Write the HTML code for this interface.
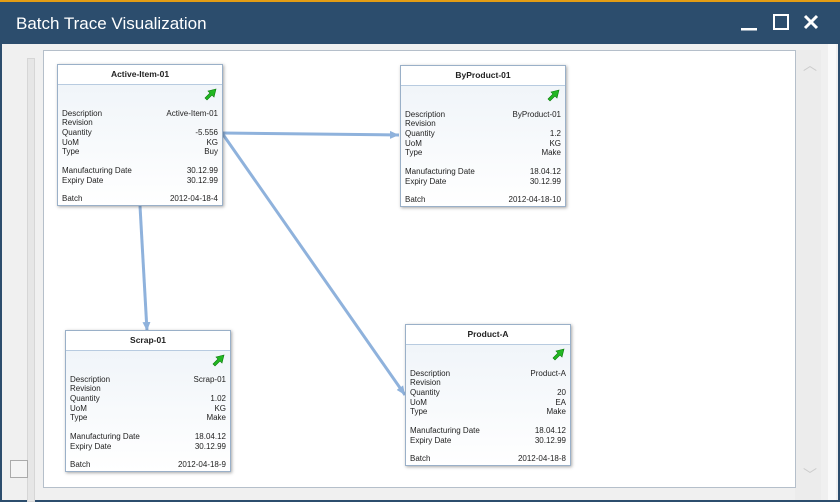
<!DOCTYPE html>
<html><head><style>
body{margin:0;width:840px;height:500px;overflow:hidden;background:#2c4d6d;font-family:"Liberation Sans",sans-serif;position:relative}
.top{position:absolute;left:0;top:0;width:840px;height:2px;background:#e49d14}
.title{position:absolute;left:16px;top:14px;color:#fff;font-size:17px}
.body{position:absolute;left:2px;top:44px;width:836px;height:456px;background:#f0f0f0}
.canvas{position:absolute;left:43px;top:50px;width:751px;height:436px;background:#fff;border:1px solid #b5bfca}
.card{position:absolute;width:164px;height:140px;border:1px solid #9ab0c8;box-shadow:1px 1px 3px rgba(0,0,0,.35);background:linear-gradient(#eef3f8,#fff);font-size:8px;color:#222}
.hd{height:19px;border-bottom:1px solid #b8cbe0;background:#fff;text-align:center;font-weight:bold;line-height:19px;font-size:8.5px}
.r{position:absolute;left:4px;right:4px;display:flex;justify-content:space-between;line-height:9px}
.ic{position:absolute;right:5px;top:23px}
</style></head><body>
<div class="top"></div>
<div class="title">Batch Trace Visualization</div>
<svg style="position:absolute;left:738px;top:12px" width="90" height="22">
<rect x="3" y="16" width="16" height="2.5" fill="#fff"/>
<rect x="36" y="3" width="14" height="14" fill="none" stroke="#fff" stroke-width="2"/>
<path d="M67 4 L79 16 M79 4 L67 16" stroke="#fff" stroke-width="3"/>
</svg>
<div class="body"></div>
<div style="position:absolute;left:27px;top:58px;width:6px;height:442px;background:#e6e6e6;border:1px solid #d6d6d6"></div>
<div style="position:absolute;left:10px;top:460px;width:16px;height:16px;background:#f4f4f4;border:1px solid #aaa"></div>
<div style="position:absolute;left:795px;top:50px;width:26px;height:450px;background:#ececec"></div>
<div style="position:absolute;left:828px;top:44px;width:8px;height:456px;background:#fafafa"></div>
<div style="position:absolute;left:803px;top:55px;color:#ccc;font-size:14px">︿</div>
<div style="position:absolute;left:803px;top:465px;color:#ccc;font-size:14px">﹀</div>
<div class="canvas"></div>
<svg style="position:absolute;left:0;top:0" width="840" height="500">
<defs><marker id="a" markerUnits="userSpaceOnUse" markerWidth="10" markerHeight="10" refX="9" refY="5" orient="auto"><path d="M0 1 L9 5 L0 9 Z" fill="#8fb2dc"/></marker></defs>
<g stroke="#8fb2dc" stroke-width="3" fill="none">
<line x1="222" y1="133" x2="399" y2="135" marker-end="url(#a)"/>
<line x1="222" y1="133" x2="405" y2="395" marker-end="url(#a)"/>
<line x1="140" y1="206" x2="147" y2="331" marker-end="url(#a)"/>
</g></svg>

<div class="card" style="left:57px;top:64px"><div class="hd">Active-Item-01</div>
<svg class="ic" width="13" height="13"><path d="M1 10 L6 5 L4 3 L12 1 L10 9 L8 7 L3 12 Z" fill="#22b822" stroke="#0a7a0a" stroke-width=".6"/></svg>
<div class="r" style="top:44px"><span>Description</span><span>Active-Item-01</span></div>
<div class="r" style="top:53px"><span>Revision</span><span></span></div>
<div class="r" style="top:63px"><span>Quantity</span><span>-5.556</span></div>
<div class="r" style="top:73px"><span>UoM</span><span>KG</span></div>
<div class="r" style="top:82px"><span>Type</span><span>Buy</span></div>
<div class="r" style="top:101px"><span>Manufacturing Date</span><span>30.12.99</span></div>
<div class="r" style="top:111px"><span>Expiry Date</span><span>30.12.99</span></div>
<div class="r" style="top:129px"><span>Batch</span><span>2012-04-18-4</span></div></div>

<div class="card" style="left:400px;top:65px"><div class="hd">ByProduct-01</div>
<svg class="ic" width="13" height="13"><path d="M1 10 L6 5 L4 3 L12 1 L10 9 L8 7 L3 12 Z" fill="#22b822" stroke="#0a7a0a" stroke-width=".6"/></svg>
<div class="r" style="top:44px"><span>Description</span><span>ByProduct-01</span></div>
<div class="r" style="top:53px"><span>Revision</span><span></span></div>
<div class="r" style="top:63px"><span>Quantity</span><span>1.2</span></div>
<div class="r" style="top:73px"><span>UoM</span><span>KG</span></div>
<div class="r" style="top:82px"><span>Type</span><span>Make</span></div>
<div class="r" style="top:101px"><span>Manufacturing Date</span><span>18.04.12</span></div>
<div class="r" style="top:111px"><span>Expiry Date</span><span>30.12.99</span></div>
<div class="r" style="top:129px"><span>Batch</span><span>2012-04-18-10</span></div></div>

<div class="card" style="left:65px;top:330px"><div class="hd">Scrap-01</div>
<svg class="ic" width="13" height="13"><path d="M1 10 L6 5 L4 3 L12 1 L10 9 L8 7 L3 12 Z" fill="#22b822" stroke="#0a7a0a" stroke-width=".6"/></svg>
<div class="r" style="top:44px"><span>Description</span><span>Scrap-01</span></div>
<div class="r" style="top:53px"><span>Revision</span><span></span></div>
<div class="r" style="top:63px"><span>Quantity</span><span>1.02</span></div>
<div class="r" style="top:73px"><span>UoM</span><span>KG</span></div>
<div class="r" style="top:82px"><span>Type</span><span>Make</span></div>
<div class="r" style="top:101px"><span>Manufacturing Date</span><span>18.04.12</span></div>
<div class="r" style="top:111px"><span>Expiry Date</span><span>30.12.99</span></div>
<div class="r" style="top:129px"><span>Batch</span><span>2012-04-18-9</span></div></div>

<div class="card" style="left:405px;top:324px"><div class="hd">Product-A</div>
<svg class="ic" width="13" height="13"><path d="M1 10 L6 5 L4 3 L12 1 L10 9 L8 7 L3 12 Z" fill="#22b822" stroke="#0a7a0a" stroke-width=".6"/></svg>
<div class="r" style="top:44px"><span>Description</span><span>Product-A</span></div>
<div class="r" style="top:53px"><span>Revision</span><span></span></div>
<div class="r" style="top:63px"><span>Quantity</span><span>20</span></div>
<div class="r" style="top:73px"><span>UoM</span><span>EA</span></div>
<div class="r" style="top:82px"><span>Type</span><span>Make</span></div>
<div class="r" style="top:101px"><span>Manufacturing Date</span><span>18.04.12</span></div>
<div class="r" style="top:111px"><span>Expiry Date</span><span>30.12.99</span></div>
<div class="r" style="top:129px"><span>Batch</span><span>2012-04-18-8</span></div></div>
</body></html>
